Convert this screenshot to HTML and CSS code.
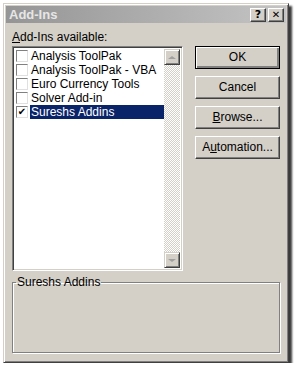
FILE: index.html
```html
<!DOCTYPE html>
<html lang="en">
<head>
    <meta charset="UTF-8">
    <title>Add-Ins</title>
    <link rel="stylesheet" href="styles.css">
</head>
<body>
    <div class="window">
        <div class="titlebar">
            <span class="title">Add-Ins</span>
            <span class="tbtn">?</span>
            <span class="tbtn close">&#x2715;</span>
        </div>
        <div class="content">
            <div class="main">
                <div class="left">
                    <div class="label"><u>A</u>dd-Ins available:</div>
                    <div class="list">
                        <div class="items">
                            <div class="item"><span class="check"></span><span class="text">Analysis ToolPak</span></div>
                            <div class="item"><span class="check"></span><span class="text">Analysis ToolPak - VBA</span></div>
                            <div class="item"><span class="check"></span><span class="text">Euro Currency Tools</span></div>
                            <div class="item"><span class="check"></span><span class="text">Solver Add-in</span></div>
                            <div class="item selected"><span class="check checked">&#x2714;</span><span class="text">Sureshs Addins</span></div>
                        </div>
                        <div class="scrollbar">
                            <div class="arrow"><span class="up"></span></div>
                            <div class="track"></div>
                            <div class="arrow"><span class="down"></span></div>
                        </div>
                    </div>
                </div>
                <div class="buttons">
                    <div class="btn default">OK</div>
                    <div class="btn">Cancel</div>
                    <div class="btn"><u>B</u>rowse...</div>
                    <div class="btn">A<u>u</u>tomation...</div>
                </div>
            </div>
            <fieldset class="group">
                <legend>Sureshs Addins</legend>
            </fieldset>
        </div>
    </div>
</body>
</html>
```
FILE: styles.css
```css
body {
    margin: 0;
    background-color: #ffffff;
    font-family: "Liberation Sans", Arial, sans-serif;
    font-size: 12px;
    color: #000000;
}
.window {
    box-sizing: border-box;
    width: 286px;
    height: 360px;
    margin: 3px 0 0 3px;
    padding: 2px;
    background-color: #d4d0c8;
    border: 1px solid;
    border-color: #d4d0c8 #404040 #404040 #d4d0c8;
    box-shadow: inset 1px 1px #ffffff, inset -1px -1px #808080, 3px 3px 2px #3a3a3a;
}
.titlebar {
    display: flex;
    align-items: center;
    height: 17px;
    padding: 0 2px 0 3px;
    background: linear-gradient(to right, #959595, #c4c4c4);
}
.title {
    flex: 1;
    color: #e6e6e6;
    font-weight: bold;
    font-size: 13px;
}
.tbtn {
    box-sizing: border-box;
    width: 16px;
    height: 14px;
    margin-left: 2px;
    background-color: #d4d0c8;
    border: 1px solid;
    border-color: #ffffff #404040 #404040 #ffffff;
    box-shadow: inset -1px -1px #808080;
    font-family: "DejaVu Sans", sans-serif;
    font-weight: bold;
    font-size: 11px;
    line-height: 12px;
    text-align: center;
}
.close {
    font-size: 10px;
}
.content {
    padding: 8px 6px 0 6px;
}
.main {
    display: flex;
}
.left {
    width: 172px;
}
.label {
    line-height: 13px;
    margin-bottom: 2px;
}
.list {
    box-sizing: border-box;
    display: flex;
    height: 225px;
    background-color: #ffffff;
    border: 1px solid;
    border-color: #808080 #ffffff #ffffff #808080;
    box-shadow: inset 1px 1px #404040, inset -1px -1px #d4d0c8;
    padding: 2px;
}
.items {
    flex: 1;
}
.item {
    display: flex;
    align-items: center;
    height: 14px;
}
.check {
    box-sizing: border-box;
    width: 12px;
    height: 12px;
    margin: 0 2px 0 1px;
    border: 1px solid;
    border-color: #808080 #e0e0e0 #e0e0e0 #808080;
    background-color: #ffffff;
    font-family: "DejaVu Sans", sans-serif;
    font-size: 10px;
    line-height: 10px;
    text-align: center;
}
.text {
    flex: 1;
    height: 14px;
    line-height: 14px;
    padding-left: 1px;
    white-space: nowrap;
}
.selected .text {
    background-color: #0a246a;
    color: #ffffff;
}
.scrollbar {
    display: flex;
    flex-direction: column;
    width: 16px;
}
.track {
    flex: 1;
    background: repeating-conic-gradient(#ffffff 0 25%, #d4d0c8 0 50%) 0 0 / 2px 2px;
}
.arrow {
    box-sizing: border-box;
    display: flex;
    align-items: center;
    justify-content: center;
    height: 16px;
    background-color: #d4d0c8;
    border: 1px solid;
    border-color: #d4d0c8 #404040 #404040 #d4d0c8;
    box-shadow: inset 1px 1px #ffffff, inset -1px -1px #808080;
}
.up {
    border-left: 4px solid transparent;
    border-right: 4px solid transparent;
    border-bottom: 3px solid #a0a0a0;
}
.down {
    border-left: 4px solid transparent;
    border-right: 4px solid transparent;
    border-top: 3px solid #a0a0a0;
}
.buttons {
    display: flex;
    flex-direction: column;
    gap: 7px;
    margin-left: 12px;
    padding-top: 15px;
}
.btn {
    box-sizing: border-box;
    width: 85px;
    height: 23px;
    background-color: #d4d0c8;
    border: 1px solid;
    border-color: #ffffff #404040 #404040 #ffffff;
    box-shadow: inset -1px -1px #808080;
    line-height: 21px;
    text-align: center;
}
.default {
    border: 1px solid #000000;
    box-shadow: inset 1px 1px #ffffff, inset -2px -2px #808080;
}
.group {
    box-sizing: border-box;
    height: 78px;
    margin: 4px 0 0 0;
    padding: 0;
    border: 1px solid #808080;
    box-shadow: 1px 1px #ffffff, inset 1px 1px #ffffff;
}
.group legend {
    padding: 0 1px;
    margin-left: 3px;
}
```
